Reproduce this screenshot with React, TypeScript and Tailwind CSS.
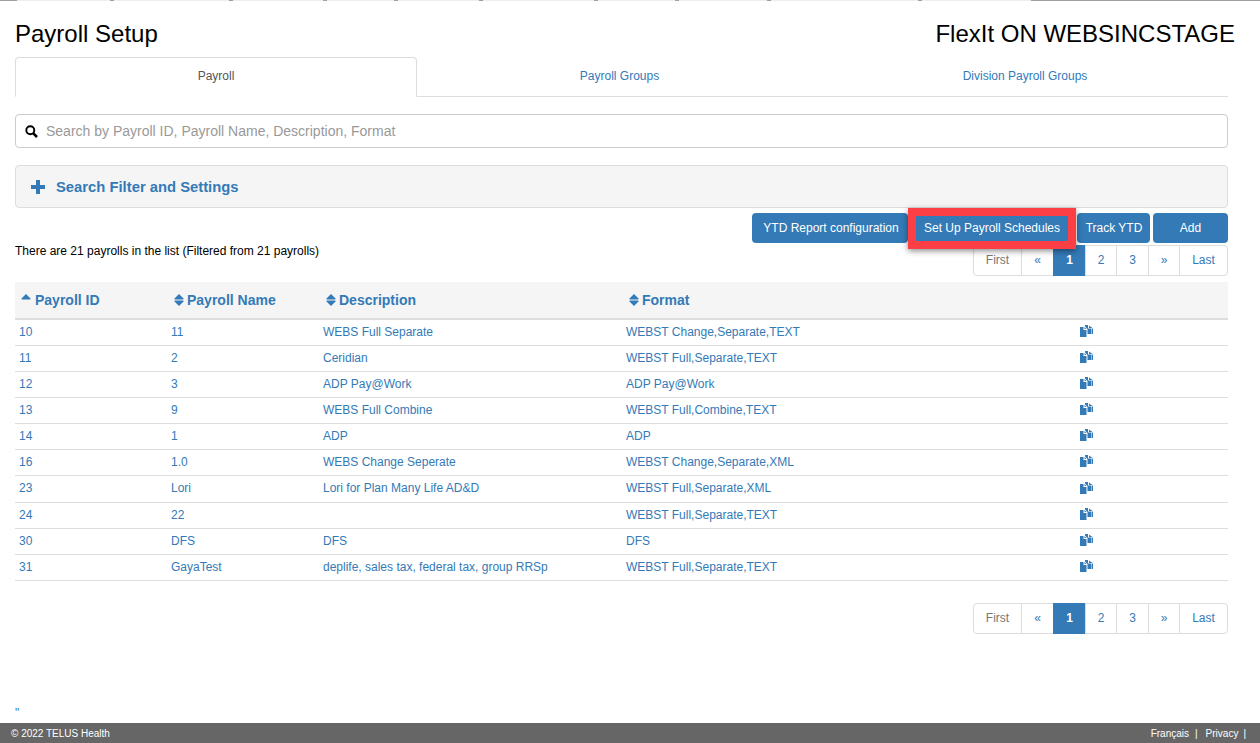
import React from 'react';

const rows = [
  ['10', '11', 'WEBS Full Separate', 'WEBST Change,Separate,TEXT'],
  ['11', '2', 'Ceridian', 'WEBST Full,Separate,TEXT'],
  ['12', '3', 'ADP Pay@Work', 'ADP Pay@Work'],
  ['13', '9', 'WEBS Full Combine', 'WEBST Full,Combine,TEXT'],
  ['14', '1', 'ADP', 'ADP'],
  ['16', '1.0', 'WEBS Change Seperate', 'WEBST Change,Separate,XML'],
  ['23', 'Lori', 'Lori for Plan Many Life AD&D', 'WEBST Full,Separate,XML'],
  ['24', '22', '', 'WEBST Full,Separate,TEXT'],
  ['30', 'DFS', 'DFS', 'DFS'],
  ['31', 'GayaTest', 'deplife, sales tax, federal tax, group RRSp', 'WEBST Full,Separate,TEXT'],
];

const SortIcon = ({ up }: { up?: boolean }) => (
  <svg width="10" height="14" viewBox="0 0 10 14" className="shrink-0" fill="#337ab7">
    <path d="M5 1 L9.5 5.6 Q10 6.4 9 6.4 H1 Q0 6.4 .5 5.6 Z" />
    {!up && <path d="M5 13 L9.5 8.4 Q10 7.6 9 7.6 H1 Q0 7.6 .5 8.4 Z" />}
  </svg>
);

const CopyIcon = () => (
  <svg width="13" height="12" viewBox="0 0 13 12" fill="#337ab7">
    <path d="M0 2 H3.5 V5 H6.5 V12 H0 Z" />
    <path d="M4.5 2 L6.5 4 H4.5 Z" />
    <path d="M5 0 H8 V3.5 H11 V9 H7.5 V4 L5 1.5 Z" />
    <path d="M9 0.5 L12.5 3 H9 Z" />
    <path d="M11.5 3.5 H13 V9 H11.5 Z" />
  </svg>
);

const Pager = () => {
  const cell = 'h-[31px] pb-[2px] flex items-center justify-center border border-[#ddd] -ml-px bg-white text-[#337ab7]';
  return (
    <div className="flex text-[12px] leading-none">
      <span className="h-[31px] w-[49px] pb-[2px] flex items-center justify-center border border-[#ddd] bg-white rounded-l text-[#777]">First</span>
      <span className={`${cell} w-[33px]`}>«</span>
      <span className="h-[31px] w-[33px] pb-[2px] -ml-px flex items-center justify-center bg-[#337ab7] border border-[#337ab7] text-white font-bold">1</span>
      <span className={`${cell} w-[32px]`}>2</span>
      <span className={`${cell} w-[33px]`}>3</span>
      <span className={`${cell} w-[32px]`}>»</span>
      <span className={`${cell} w-[49px] rounded-r`}>Last</span>
    </div>
  );
};

// strip of the window above the page, cut off by the screenshot
const TopTicks = () => (
  <svg width="1260" height="1" className="block">
    <rect width="1260" height="1" fill="#eeeeee" />
    <rect width="17" height="1" fill="#a0a0a0" />
    {[110, 229, 323, 394, 479, 594, 675, 767, 918].map((x) => (
      <rect key={x} x={x} width="4" height="1" fill="#a0a0a0" />
    ))}
    <rect x="1031" width="229" height="1" fill="#a0a0a0" />
  </svg>
);

export default function App() {
  const btn = 'h-[30px] flex items-center justify-center bg-[#337ab7] text-white text-[12px] rounded';
  return (
    <div className="h-[743px] overflow-hidden flex flex-col bg-white text-[#333] font-['Liberation_Sans',Arial,sans-serif]">
      <TopTicks />
      <div className="flex-1 pl-[15px] pr-[32px]">
        <div className="flex justify-between items-center h-[56px] pt-[10px] text-black -mr-[7px]">
          <h1 className="text-[24px] leading-none">Payroll Setup</h1>
          <div className="text-[24px] leading-none">FlexIt ON WEBSINCSTAGE</div>
        </div>

        <div className="flex h-[40px] border-b border-[#ddd] text-[12px]">
          <div className="w-[402px] h-[40px] pb-[2px] flex items-center justify-center border border-[#ddd] border-b-white bg-white rounded-t text-[#555]">Payroll</div>
          <div className="w-[405px] pb-[2px] flex items-center justify-center text-[#337ab7]">Payroll Groups</div>
          <div className="flex-1 pb-[2px] flex items-center justify-center text-[#337ab7]">Division Payroll Groups</div>
        </div>

        <div className="mt-[17px] h-[34px] border border-[#ccc] rounded flex items-center pl-[9px] gap-[8px] text-[14px] text-[#999]">
          <svg width="13" height="13" viewBox="0 0 13 13" fill="none" stroke="#000" strokeWidth="1.9">
            <circle cx="5.3" cy="5.3" r="4" />
            <path d="M8.3 8.3 L12 12" strokeWidth="2.6" />
          </svg>
          Search by Payroll ID, Payroll Name, Description, Format
        </div>

        <div className="mt-[17px] h-[43px] bg-[#f5f5f5] border border-[#ddd] rounded flex items-center pl-[15px] gap-[11px] text-[#337ab7] text-[14.8px] font-bold">
          <svg width="14" height="14" viewBox="0 0 14 14" fill="#337ab7">
            <path d="M5 0 H9 V5 H14 V9 H9 V14 H5 V9 H0 V5 H5 Z" />
          </svg>
          <span className="pt-[2px]">Search Filter and Settings</span>
        </div>

        <div className="flex justify-between mt-[5px]">
          <div className="pt-[31px] text-[12px] leading-[14px] text-black">There are 21 payrolls in the list (Filtered from 21 payrolls)</div>
          <div className="flex flex-col items-end">
            <div className="flex">
              <div className={`${btn} w-[156px] pl-[2px]`}>YTD Report configuration</div>
              <div className="relative">
                <div className={`${btn} w-[168px] rounded-none`}>Set Up Payroll Schedules</div>
                <div className="absolute left-0 -top-[5px] w-[168px] h-[41px] border-[8px] border-[#fb3f44] shadow-[0_2px_6px_rgba(0,0,0,0.45)]" />
              </div>
              <div className={`${btn} w-[73px] ml-px pl-[1px]`}>Track YTD</div>
              <div className={`${btn} w-[75px] ml-[3px]`}>Add</div>
            </div>
            <div className="mt-[2px]"><Pager /></div>
          </div>
        </div>

        <div className="mt-[6px] text-[12px]">
          <div className="h-[38px] bg-[#f5f5f5] border-b-2 border-[#ddd] flex items-center text-[14px] font-bold text-[#337ab7]">
            <div className="w-[152px] pl-[6px] flex items-center gap-[4px]"><SortIcon up />Payroll ID</div>
            <div className="w-[152px] pl-[7px] flex items-center gap-[3px]"><SortIcon />Payroll Name</div>
            <div className="w-[303px] pl-[7px] flex items-center gap-[3px]"><SortIcon />Description</div>
            <div className="pl-[7px] flex items-center gap-[3px]"><SortIcon />Format</div>
          </div>
          {rows.map((r, i) => (
            <div key={i} className={`${i === 6 ? 'h-[27px]' : 'h-[26px]'} pb-[2px] border-b border-[#ddd] flex items-center text-[#337ab7]`}>
              <div className="w-[156px] pl-[4px]">{r[0]}</div>
              <div className="w-[152px]">{r[1]}</div>
              <div className="w-[303px]">{r[2]}</div>
              <div className="w-[454px]">{r[3]}</div>
              <div className="flex -mt-px"><CopyIcon /></div>
            </div>
          ))}
        </div>

        <div className="flex justify-end mt-[22px]"><Pager /></div>
        <div className="mt-[73px] text-[12px] leading-none text-[#337ab7]">"</div>
      </div>

      <footer className="h-[20px] bg-[#666] text-white text-[10px] flex items-center justify-between pl-[11px] pr-[14px]">
        <span>© 2022 TELUS Health</span>
        <span className="flex whitespace-pre">
          <span>Français</span><span className="ml-[6px]">|</span><span className="ml-[8px]">Privacy</span><span className="ml-[5px]">|</span>
        </span>
      </footer>
    </div>
  );
}
